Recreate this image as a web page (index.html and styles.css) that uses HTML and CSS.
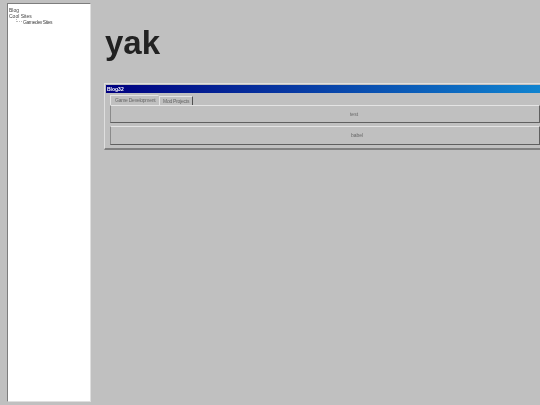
FILE: index.html
```html
<!DOCTYPE html>
<html lang="en">
<head>
<meta charset="utf-8">
<title>Blog32</title>
<link rel="stylesheet" href="styles.css">
</head>
<body>
<div class="page">
  <aside class="tree">
    <div class="node">Blog</div>
    <div class="node">Cool Sites</div>
    <div class="node child"><span class="connector"></span>Gamedev Sites</div>
  </aside>
  <main class="main">
    <h1 class="title">yak</h1>
    <section class="window">
      <div class="titlebar">Blog32</div>
      <div class="tabs">
        <div class="tab active">Game Development</div>
        <div class="tab">Mod Projects</div>
      </div>
      <div class="panel">
        <div class="button first">test</div>
        <div class="button second">babel</div>
      </div>
    </section>
  </main>
</div>
</body>
</html>
```
FILE: styles.css
```css
html, body {
  margin: 0;
  height: 100%;
  overflow: hidden;
  background: #c0c0c0;
}
body, .page {
  font-family: "Liberation Sans", Arial, sans-serif;
}
.page {
  display: flex;
  width: 540px;
  height: 405px;
  padding: 3px 0 3px 7px;
  box-sizing: border-box;
  overflow: hidden;
  filter: blur(0.3px);
}
.tree {
  flex: none;
  width: 84px;
  box-sizing: border-box;
  padding: 3px 0 0 1px;
  background: #fff;
  border-style: solid;
  border-width: 1px;
  border-color: #7d7d7d #dfdfdf #dfdfdf #7d7d7d;
  font-size: 5px;
  line-height: 6px;
  color: #444;
}
.node {
  height: 6px;
  white-space: nowrap;
}
.child {
  display: flex;
  padding-left: 7px;
  letter-spacing: -0.4px;
}
.connector {
  flex: none;
  width: 6px;
  height: 3px;
  margin-right: 1px;
  border-left: 1px dotted #bbb;
  border-bottom: 1px dotted #bbb;
  box-sizing: border-box;
}
.main {
  flex: none;
  width: 449px;
  margin-left: 13px;
}
.title {
  margin: 21px 0 0 1px;
  height: 59px;
  font-size: 33px;
  line-height: 38px;
  font-weight: 700;
  color: #222;
}
.window {
  width: 437px;
  height: 67px;
  box-sizing: border-box;
  padding: 1px 0 0 1px;
  background: #c0c0c0;
  border-style: solid;
  border-width: 1px 0 2px 1px;
  border-color: #dfdfdf #808080 #808080 #dfdfdf;
}
.titlebar {
  height: 8px;
  padding-left: 1px;
  background: linear-gradient(to right, #000080, #1084d0);
  color: #fff;
  font-size: 5px;
  font-weight: 700;
  line-height: 8px;
}
.tabs {
  display: flex;
  align-items: flex-end;
  height: 12px;
  padding-left: 4px;
}
.tab {
  height: 9px;
  width: 34px;
  padding-left: 3px;
  box-sizing: border-box;
  border-style: solid;
  border-width: 1px 1px 0 1px;
  border-color: #e4e4e4 #505050 #c0c0c0 #e4e4e4;
  font-size: 5px;
  line-height: 8px;
  letter-spacing: -0.25px;
  color: #666;
  white-space: nowrap;
}
.tab.active {
  width: 49px;
  height: 10px;
  padding-left: 4px;
  border-right-color: #c0c0c0;
}
.panel {
  margin: 0 0 0 4px;
}
.button {
  width: 430px;
  height: 18px;
  margin-bottom: 3px;
  box-sizing: border-box;
  border-style: solid;
  border-width: 1px;
  border-color: #e4e4e4 #606060 #606060 #8a8a8a;
  font-size: 5px;
  line-height: 16px;
  text-align: center;
  color: #666;
}
.first {
  padding-left: 58px;
}
.second {
  height: 19px;
  margin-bottom: 2px;
  padding-left: 64px;
}
```
